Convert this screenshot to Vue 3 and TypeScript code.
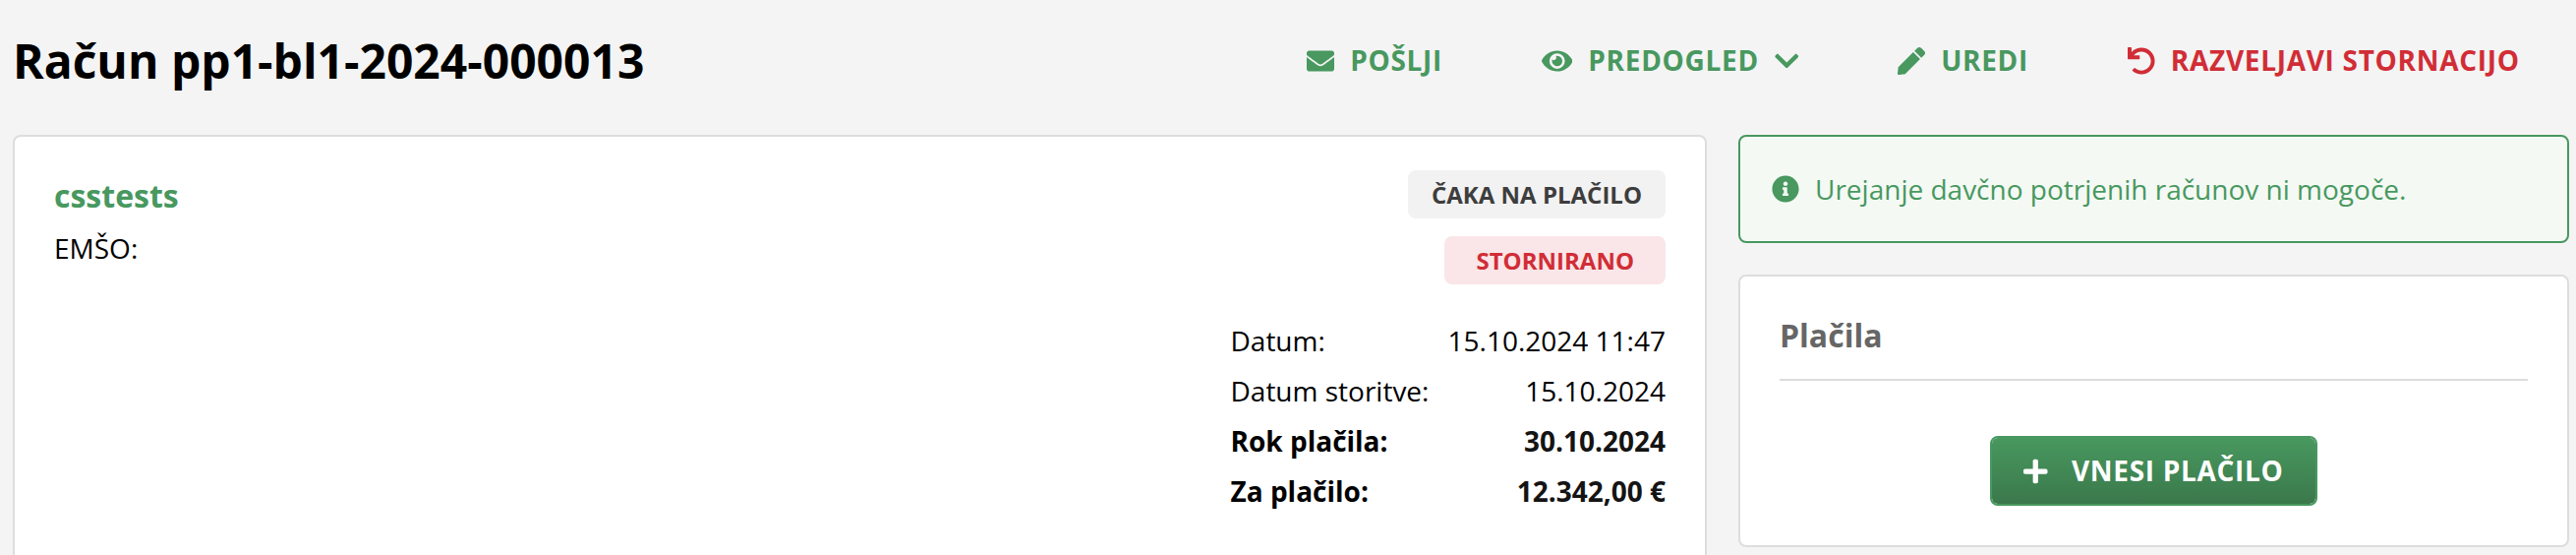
<script setup lang="ts">
interface Icon {
  width: number
  path: string
}

interface Action {
  label: string
  icon: Icon
  danger?: boolean
  dropdown?: boolean
}

interface DetailRow {
  label: string
  value: string
  strong?: boolean
}

const icons: Record<string, Icon> = {
  envelope: {
    width: 512,
    path: 'M502.3 190.8c3.9-3.1 9.7-.2 9.7 4.7V400c0 26.5-21.5 48-48 48H48c-26.5 0-48-21.5-48-48V195.6c0-5 5.7-7.8 9.7-4.7 22.4 17.4 52.1 39.5 154.1 113.6 21.1 15.4 56.7 47.8 92.2 47.6 35.7.3 72-32.8 92.3-47.6 102-74.1 131.6-96.3 154-113.7zM256 320c23.2.4 56.6-29.2 73.4-41.4 132.7-96.3 142.8-104.7 173.4-128.7 5.8-4.5 9.2-11.5 9.2-18.9v-19c0-26.5-21.5-48-48-48H48c-26.5 0-48 21.5-48 48v19c0 7.4 3.4 14.3 9.2 18.9 30.6 23.9 40.7 32.4 173.4 128.7 16.8 12.2 50.2 41.8 73.4 41.4z',
  },
  eye: {
    width: 576,
    path: 'M572.52 241.4C518.29 135.59 410.93 64 288 64S57.68 135.64 3.48 241.41a32.35 32.35 0 0 0 0 29.19C57.71 376.41 165.07 448 288 448s230.32-71.64 284.52-177.41a32.35 32.35 0 0 0 0-29.19zM288 400a144 144 0 1 1 144-144 143.93 143.93 0 0 1-144 144zm0-240a95.31 95.31 0 0 0-25.31 3.79 47.85 47.85 0 0 1-66.9 66.9A95.78 95.78 0 1 0 288 160z',
  },
  pen: {
    width: 512,
    path: 'M290.74 93.24l128.02 128.02-277.99 277.99-114.14 12.6C11.35 513.54-1.56 500.62.14 485.34l12.7-114.22 277.9-277.88zm207.2-19.06l-60.11-60.11c-18.75-18.75-49.16-18.75-67.91 0l-56.55 56.55 128.02 128.02 56.55-56.55c18.75-18.76 18.75-49.16 0-67.91z',
  },
  undo: {
    width: 512,
    path: 'M212.333 224.333H12c-6.627 0-12-5.373-12-12V12C0 5.373 5.373 0 12 0h48c6.627 0 12 5.373 12 12v78.112C117.773 39.279 184.26 7.47 258.175 8.007c136.906.994 246.448 111.623 246.157 248.532C504.041 393.258 393.12 504 256.333 504c-64.089 0-122.496-24.313-166.51-64.215-5.099-4.622-5.334-12.554-.467-17.42l33.967-33.967c4.474-4.474 11.662-4.717 16.401-.525C170.76 415.336 211.58 432 256.333 432c97.268 0 176-78.716 176-176 0-97.267-78.716-176-176-176-58.496 0-110.28 28.476-142.274 72.333h98.274c6.627 0 12 5.373 12 12v48c0 6.627-5.373 12-12 12z',
  },
  chevronDown: {
    width: 448,
    path: 'M207.029 381.476L12.686 187.132c-9.373-9.373-9.373-24.569 0-33.941l22.667-22.667c9.357-9.357 24.522-9.375 33.901-.04L224 284.505l154.745-154.021c9.379-9.335 24.544-9.317 33.901.04l22.667 22.667c9.373 9.373 9.373 24.569 0 33.941L240.971 381.476c-9.373 9.372-24.569 9.372-33.942 0z',
  },
  info: {
    width: 512,
    path: 'M256 8C119.043 8 8 119.083 8 256c0 136.997 111.043 248 248 248s248-111.003 248-248C504 119.083 392.957 8 256 8zm0 110c23.196 0 42 18.804 42 42s-18.804 42-42 42-42-18.804-42-42 18.804-42 42-42zm56 254c0 6.627-5.373 12-12 12h-88c-6.627 0-12-5.373-12-12v-24c0-6.627 5.373-12 12-12h12v-64h-12c-6.627 0-12-5.373-12-12v-24c0-6.627 5.373-12 12-12h64c6.627 0 12 5.373 12 12v100h12c6.627 0 12 5.373 12 12v24z',
  },
  plus: {
    width: 448,
    path: 'M416 208H272V64c0-17.67-14.33-32-32-32h-32c-17.67 0-32 14.33-32 32v144H32c-17.67 0-32 14.33-32 32v32c0 17.67 14.33 32 32 32h144v144c0 17.67 14.33 32 32 32h32c17.67 0 32-14.33 32-32V304h144c17.67 0 32-14.33 32-32v-32c0-17.67-14.33-32-32-32z',
  },
}

const actions: Action[] = [
  { label: 'POŠLJI', icon: icons.envelope },
  { label: 'PREDOGLED', icon: icons.eye, dropdown: true },
  { label: 'UREDI', icon: icons.pen },
  { label: 'RAZVELJAVI STORNACIJO', icon: icons.undo, danger: true },
]

const rows: DetailRow[] = [
  { label: 'Datum:', value: '15.10.2024 11:47' },
  { label: 'Datum storitve:', value: '15.10.2024' },
  { label: 'Rok plačila:', value: '30.10.2024', strong: true },
  { label: 'Za plačilo:', value: '12.342,00 €', strong: true },
]
</script>

<template>
  <div class="page">
    <header class="header">
      <h1 class="title">Račun pp1-bl1-2024-000013</h1>
      <nav class="actions">
        <a v-for="action in actions" :key="action.label" class="action" :class="{ danger: action.danger }">
          <svg class="icon" :viewBox="`0 0 ${action.icon.width} 512`"><path :d="action.icon.path" /></svg>
          <span class="label">{{ action.label }}</span>
          <svg v-if="action.dropdown" class="icon" :viewBox="`0 0 ${icons.chevronDown.width} 512`">
            <path :d="icons.chevronDown.path" />
          </svg>
        </a>
      </nav>
    </header>

    <main class="content">
      <section class="card invoice">
        <div class="client">
          <a class="client-name">csstests</a>
          <div class="client-line">EMŠO:</div>
        </div>
        <div class="summary">
          <span class="badge">ČAKA NA PLAČILO</span>
          <span class="badge cancelled">STORNIRANO</span>
          <dl class="details">
            <div v-for="row in rows" :key="row.label" class="row" :class="{ strong: row.strong }">
              <dt>{{ row.label }}</dt>
              <dd>{{ row.value }}</dd>
            </div>
          </dl>
        </div>
      </section>

      <aside class="side">
        <div class="notice">
          <svg class="icon" viewBox="0 0 512 512"><path :d="icons.info.path" /></svg>
          <span>Urejanje davčno potrjenih računov ni mogoče.</span>
        </div>
        <section class="card payments">
          <h2 class="payments-title">Plačila</h2>
          <button class="add" type="button">
            <svg class="icon" viewBox="0 0 448 512"><path :d="icons.plus.path" /></svg>
            <span class="label">VNESI PLAČILO</span>
          </button>
        </section>
      </aside>
    </main>
  </div>
</template>

<style>
html,
body {
  margin: 0;
  background: #f4f4f4;
}
</style>

<style scoped>
.page {
  box-sizing: border-box;
  width: 2620px;
  height: 564px;
  overflow: hidden;
  padding: 0 7px 0 13px;
  background: #f4f4f4;
  color: #000;
  font-family: "Open Sans", "Noto Sans", sans-serif;
  font-size: 28px;
  line-height: 38px;
}

.header {
  display: flex;
  align-items: center;
  justify-content: space-between;
  height: 123px;
  margin-bottom: 14px;
}

.title {
  margin: 1px 0 0;
  font-size: 48px;
  font-weight: 700;
  line-height: 66px;
}

.actions {
  display: flex;
  gap: 100.8px;
  padding-right: 50.3px;
}

.action {
  display: flex;
  align-items: center;
  gap: 16px;
  color: #48985f;
  font-weight: 700;
  letter-spacing: 0.7px;
  white-space: nowrap;
}

.action.danger {
  color: #d12d36;
}

.label {
  margin-bottom: 1px;
}

.icon {
  display: block;
  flex: none;
  height: 28px;
  fill: currentColor;
}

.content {
  display: flex;
  align-items: flex-start;
  justify-content: space-between;
}

.card {
  box-sizing: border-box;
  border: 2px solid #ddd;
  border-radius: 8px;
  background: #fff;
}

.invoice {
  display: flex;
  justify-content: space-between;
  width: 1723px;
  height: 480px;
  padding: 34px 40px;
}

.client-name {
  display: block;
  margin-top: 2px;
  color: #48985f;
  font-size: 32px;
  font-weight: 700;
  line-height: 48px;
}

.client-line {
  margin-top: 10px;
}

.summary {
  display: flex;
  flex-direction: column;
  align-items: flex-end;
  width: 442.5px;
}

.badge {
  padding: 0 24px;
  border-radius: 8px;
  background: #f2f2f2;
  color: #3d3d3d;
  font-size: 24px;
  font-weight: 700;
  line-height: 49px;
}

.badge.cancelled {
  margin-top: 18px;
  padding: 0 32px;
  background: #fae6e8;
  color: #d12d36;
}

.details {
  width: 100%;
  margin: 32px 0 0;
}

.row {
  display: flex;
  justify-content: space-between;
  line-height: 51px;
}

.row dd {
  margin: 0;
}

.row.strong {
  font-weight: 700;
}

.row.strong dd {
  color: #141414;
}

.side {
  width: 845px;
}

.notice {
  box-sizing: border-box;
  display: flex;
  align-items: center;
  gap: 16px;
  height: 110px;
  margin-bottom: 32px;
  padding: 0 32px;
  border: 2px solid #48985f;
  border-radius: 8px;
  background: #f4f9f4;
  color: #48985f;
}

.payments {
  display: flex;
  flex-direction: column;
  align-items: center;
  height: 277px;
  padding: 38px 40px 40px;
}

.payments-title {
  align-self: stretch;
  height: 66px;
  margin: 0;
  border-bottom: 2px solid #ddd;
  color: #666;
  font-size: 32px;
  font-weight: 700;
  line-height: 44px;
}

.add {
  box-sizing: border-box;
  display: flex;
  align-items: center;
  gap: 24px;
  height: 71px;
  margin-top: 56px;
  padding: 0 32px;
  border: 2px solid #48985f;
  border-radius: 8px;
  background: linear-gradient(#48985f, #3b784b) padding-box;
  color: #fff;
  font: inherit;
  font-weight: 700;
  letter-spacing: 0.7px;
}
</style>
